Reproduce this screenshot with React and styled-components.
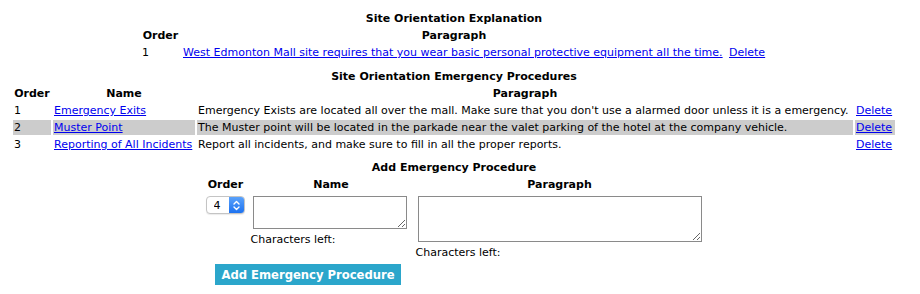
import React from "react";
import styled, { createGlobalStyle } from "styled-components";

const GlobalStyle = createGlobalStyle`
  body {
    margin: 9px 8px 8px;
    background: #ffffff;
    color: #000000;
    font-family: "DejaVu Sans", Verdana, sans-serif;
    font-size: 11px;
    line-height: 13px;
  }
`;

const Page = styled.div`
  width: 892px;
  display: flex;
  flex-direction: column;
  align-items: center;
`;

const Table = styled.table`
  border-collapse: separate;
  border-spacing: 2px;
  margin-top: ${(p) => p.$gap || 0}px;
  font-size: 11px;
  line-height: 13px;
`;

const Title = styled.th`
  padding: 1px;
  font-weight: bold;
  text-align: center;
`;

const Head = styled.th`
  padding: 1px;
  font-weight: bold;
  text-align: center;
  width: ${(p) => (p.$w ? `${p.$w}px` : "auto")};
`;

const Cell = styled.td`
  padding: 1px;
  text-align: left;
  vertical-align: ${(p) => (p.$top ? "top" : "middle")};
  background: ${(p) => (p.$shade ? "#cccccc" : "transparent")};
  white-space: ${(p) => (p.$nowrap ? "nowrap" : "normal")};
`;

const Link = styled.a`
  color: #0000ee;
  text-decoration: underline;
  cursor: pointer;
`;

const SelectBox = styled.div`
  display: flex;
  width: 39px;
  height: 18px;
  margin: 1px 2px 0 1px;
  box-sizing: border-box;
  border: 1px solid #c4c4c4;
  border-radius: 4px;
  background: #ffffff;
  box-shadow: 0 1px 1px rgba(0, 0, 0, 0.08);
  overflow: hidden;
`;

const NativeSelect = styled.select`
  appearance: none;
  -webkit-appearance: none;
  border: none;
  outline: none;
  background: transparent;
  flex: 1;
  min-width: 0;
  padding: 0 0 0 7px;
  margin: 0;
  font-family: "DejaVu Sans", Verdana, sans-serif;
  font-size: 11px;
  color: #000;
`;

const Stepper = styled.span`
  width: 15px;
  display: flex;
  align-items: center;
  justify-content: center;
  background: linear-gradient(#5aa2fb, #1d72f0);
`;

const Field = styled.textarea`
  display: block;
  box-sizing: border-box;
  width: ${(p) => p.$w}px;
  height: ${(p) => p.$h}px;
  margin: 1px ${(p) => p.$mr || 2}px 4px 2px;
  border: 1px solid #8a8a8a;
  padding: 2px;
  font-family: "DejaVu Sans", Verdana, sans-serif;
  font-size: 11px;
  resize: both;
`;

const Counter = styled.div`
  white-space: nowrap;
`;

const ButtonCell = styled.td`
  padding: 1px;
  text-align: center;
`;

const Button = styled.button`
  height: 21px;
  margin-top: 1px;
  padding: 0 6px;
  border: none;
  background: #2ba6cb;
  color: #ffffff;
  font-family: "DejaVu Sans", Verdana, sans-serif;
  font-weight: bold;
  font-size: 11.6px;
  cursor: pointer;
`;

const explanation = [
  {
    order: 1,
    text: "West Edmonton Mall site requires that you wear basic personal protective equipment all the time.",
  },
];

const procedures = [
  {
    order: 1,
    name: "Emergency Exits",
    text: "Emergency Exists are located all over the mall. Make sure that you don't use a alarmed door unless it is a emergency.",
  },
  {
    order: 2,
    name: "Muster Point",
    text: "The Muster point will be located in the parkade near the valet parking of the hotel at the company vehicle.",
  },
  {
    order: 3,
    name: "Reporting of All Incidents",
    text: "Report all incidents, and make sure to fill in all the proper reports.",
  },
];

function Chevrons() {
  return (
    <svg width="7" height="11" viewBox="0 0 7 11" fill="none" stroke="#ffffff" strokeWidth="1.4" strokeLinecap="round" strokeLinejoin="round">
      <path d="M1 4 L3.5 1.5 L6 4" />
      <path d="M1 7 L3.5 9.5 L6 7" />
    </svg>
  );
}

export default function App() {
  return (
    <>
      <GlobalStyle />
      <Page>
        <Table>
          <tbody>
            <tr>
              <Title colSpan={3}>Site Orientation Explanation</Title>
            </tr>
            <tr>
              <Head $w={37}>Order</Head>
              <Head $w={542}>Paragraph</Head>
              <Head $w={37}></Head>
            </tr>
            {explanation.map((row) => (
              <tr key={row.order}>
                <Cell>{row.order}</Cell>
                <Cell $nowrap>
                  <Link>{row.text}</Link>
                </Cell>
                <Cell>
                  <Link>Delete</Link>
                </Cell>
              </tr>
            ))}
          </tbody>
        </Table>

        <Table $gap={5}>
          <tbody>
            <tr>
              <Title colSpan={4}>Site Orientation Emergency Procedures</Title>
            </tr>
            <tr>
              <Head $w={36}>Order</Head>
              <Head $w={140}>Name</Head>
              <Head $w={654}>Paragraph</Head>
              <Head $w={38}></Head>
            </tr>
            {procedures.map((row) => (
              <tr key={row.order}>
                <Cell $shade={row.order === 2}>{row.order}</Cell>
                <Cell $shade={row.order === 2} $nowrap>
                  <Link>{row.name}</Link>
                </Cell>
                <Cell $shade={row.order === 2} $nowrap>
                  {row.text}
                </Cell>
                <Cell $shade={row.order === 2}>
                  <Link>Delete</Link>
                </Cell>
              </tr>
            ))}
          </tbody>
        </Table>

        <Table $gap={4}>
          <tbody>
            <tr>
              <Title colSpan={3}>Add Emergency Procedure</Title>
            </tr>
            <tr>
              <Head>Order</Head>
              <Head>Name</Head>
              <Head>Paragraph</Head>
            </tr>
            <tr>
              <Cell $top>
                <SelectBox>
                  <NativeSelect defaultValue="4">
                    <option value="1">1</option>
                    <option value="2">2</option>
                    <option value="3">3</option>
                    <option value="4">4</option>
                  </NativeSelect>
                  <Stepper>
                    <Chevrons />
                  </Stepper>
                </SelectBox>
              </Cell>
              <Cell $top>
                <Field $w={154} $h={33} $mr={5} />
                <Counter>Characters left: </Counter>
              </Cell>
              <Cell $top>
                <Field $w={284} $h={46} />
                <Counter>Characters left: </Counter>
              </Cell>
            </tr>
            <tr>
              <ButtonCell colSpan={2}>
                <Button type="button">Add Emergency Procedure</Button>
              </ButtonCell>
              <Cell></Cell>
            </tr>
          </tbody>
        </Table>
      </Page>
    </>
  );
}
